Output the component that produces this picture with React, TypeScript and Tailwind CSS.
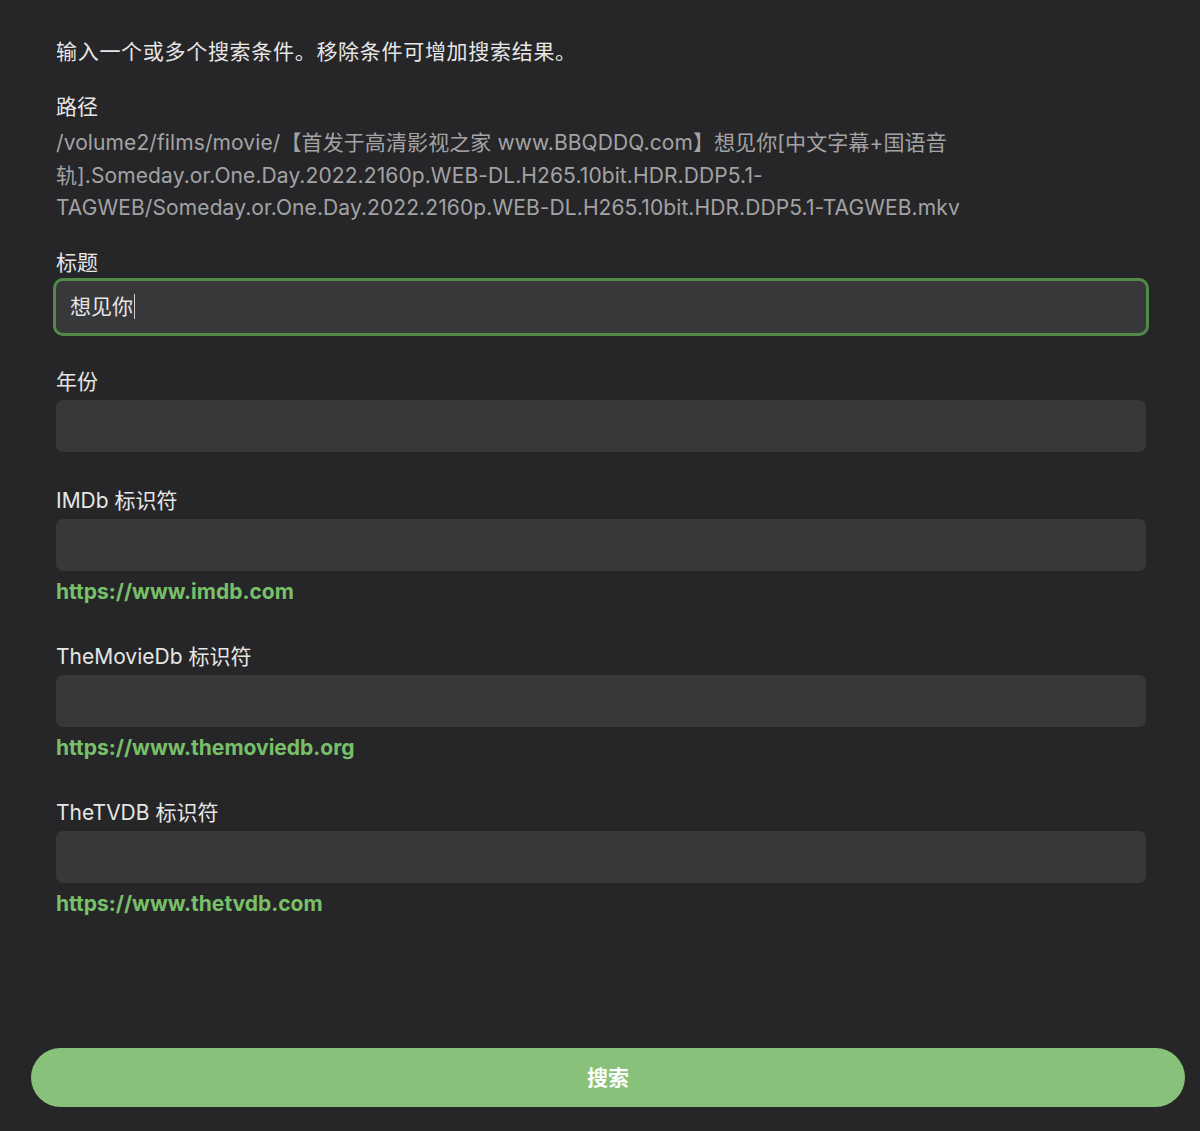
import React from "react"

const font = { fontFamily: '"Inter", "Noto Sans CJK SC", sans-serif' }

function Field({ label, value, focused, link }: { label: string; value?: string; focused?: boolean; link?: string }) {
  return (
    <div className="flex flex-col">
      <div className="text-[21px] leading-[32px] text-[#e6e6e6]">{label}</div>
      <div
        className={
          "mt-[2px] flex h-[52px] w-[1090px] items-center rounded-[7px] bg-[#38383a] px-[14px] text-[21px] text-[#e6e6e6] " +
          (focused ? "ring-[3px] ring-[#528a48]" : "")
        }
      >
        {value}
        {focused && <span className="ml-[1px] inline-block h-[25px] w-[1px] bg-[#d0d0d0]" />}
      </div>
      {link && (
        <a href={link} className="mt-[5px] text-[21px] font-bold leading-[32px] text-[#78c068]">
          {link}
        </a>
      )}
    </div>
  )
}

export default function App() {
  return (
    <div className="flex h-[1131px] w-[1200px] flex-col bg-[#262628]" style={font}>
      <div className="flex flex-col pl-[56px] pt-[36px]">
        <p className="text-[21px] leading-[32px] tracking-[0.7px] text-[#e6e6e6]">输入一个或多个搜索条件。移除条件可增加搜索结果。</p>

        <div className="mt-[23px] text-[21px] leading-[32px] text-[#e6e6e6]">路径</div>
        <p className="mt-[4px] whitespace-nowrap text-[21px] leading-[32.5px] tracking-[0.1px] text-[#a3a3a5]">
          /volume2/films/movie/【首发于高清影视之家 www.BBQDDQ.com】想见你[中文字幕+国语音
          <br />
          轨].Someday.or.One.Day.2022.2160p.WEB-DL.H265.10bit.HDR.DDP5.1-
          <br />
          TAGWEB/Someday.or.One.Day.2022.2160p.WEB-DL.H265.10bit.HDR.DDP5.1-TAGWEB.mkv
        </p>

        <div className="mt-[22px] flex flex-col gap-[33px]">
          <Field label="标题" value="想见你" focused />
          <Field label="年份" />
          <Field label="IMDb 标识符" link="https://www.imdb.com" />
          <Field label="TheMovieDb 标识符" link="https://www.themoviedb.org" />
          <Field label="TheTVDB 标识符" link="https://www.thetvdb.com" />
        </div>
      </div>

      <button className="mb-[24px] ml-[31px] mt-auto h-[59px] w-[1154px] rounded-full bg-[#88c27a] text-[21px] font-bold text-white">
        搜索
      </button>
    </div>
  )
}
